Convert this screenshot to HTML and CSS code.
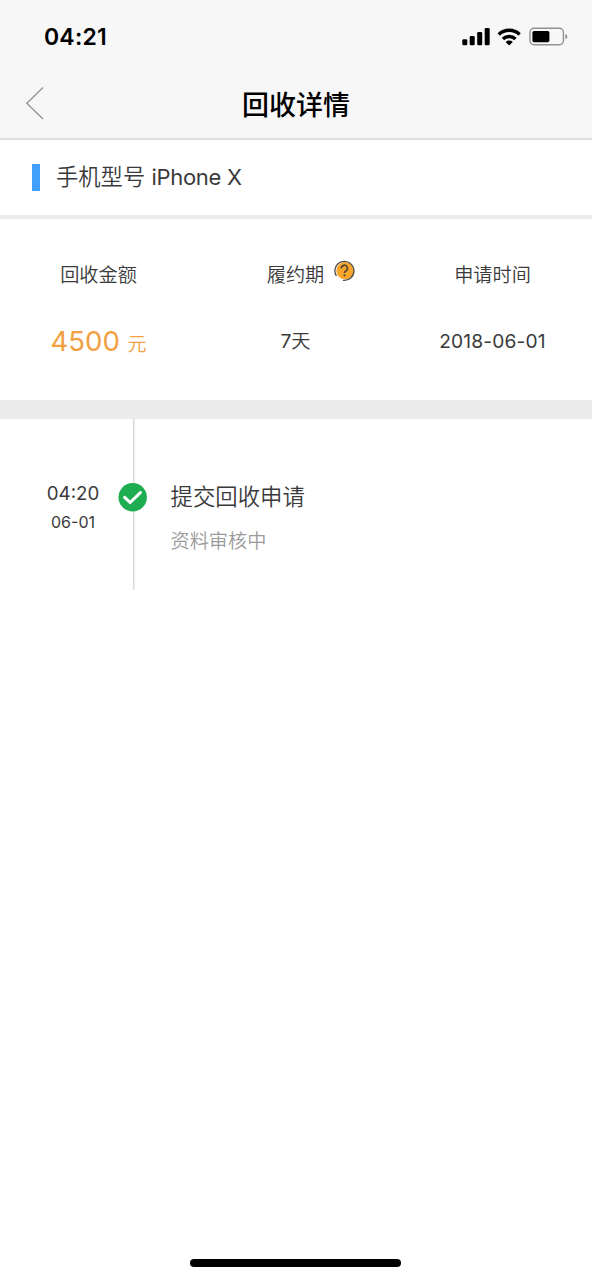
FILE: index.html
```html
<!DOCTYPE html>
<html lang="zh-CN">
<head>
<meta charset="utf-8">
<title>回收详情</title>
<link rel="stylesheet" href="styles.css">
</head>
<body>
<div class="screen">
  <header class="header">
    <div class="status">
      <span class="clock">04:21</span>
      <svg class="status-icons" width="108" height="22" viewBox="0 0 108 22">
        <rect x="2.3" y="12.2" width="5" height="6" rx="1.3"/>
        <rect x="9.7" y="9" width="5" height="9.2" rx="1.3"/>
        <rect x="17.2" y="5" width="5" height="13.2" rx="1.3"/>
        <rect x="24.7" y="1" width="5" height="17.2" rx="1.3"/>
        <path d="M38.8 7.4a15.2 15.2 0 0 1 20.8 0M42.9 12a9 9 0 0 1 12.6 0" fill="none" stroke="#000" stroke-width="3.4"/>
        <path d="M49.2 18.4l-3.6-3.5a5.2 5.2 0 0 1 7.2 0z"/>
        <rect x="70" y="1.3" width="33.4" height="16.4" rx="4" fill="none" stroke="#929292" stroke-width="1.4"/>
        <rect x="72.4" y="3.9" width="17" height="11.4" rx="1.8"/>
        <path d="M105.3 6.7c2.7 1 2.7 4.6 0 5.6z" fill="#929292"/>
      </svg>
    </div>
    <div class="nav">
      <svg class="back" width="20" height="34" viewBox="0 0 20 34"><path d="M18 1.5L1.8 17.2 18 33" fill="none" stroke="#929292" stroke-width="1.3"/></svg>
      <h1 class="title">回收详情</h1>
    </div>
  </header>
  <section class="model"><i class="mark"></i><span class="model-name">手机型号 <span class="device">iPhone X</span></span></section>
  <section class="summary">
    <div class="cell"><span class="label">回收金额</span><span class="value price">4500 <small class="unit">元</small></span></div>
    <div class="cell">
      <span class="label">履约期<svg class="help" width="22" height="22" viewBox="0 0 22 22">
        <circle cx="11.9" cy="10.7" r="8.6" fill="#f8a72b"/>
        <path d="M3.4 16A9.5 9.5 0 1 1 10 20.3" fill="none" stroke="#514a44" stroke-width="1.3"/>
        <path d="M8.4 8.4a3 3 0 1 1 4.4 2.5c-1 .5-1.3 1-1.3 2" fill="none" stroke="#514536" stroke-width="1.7"/>
        <circle cx="11.5" cy="15.3" r="1.1" fill="#514536"/>
      </svg></span>
      <span class="value">7天</span>
    </div>
    <div class="cell"><span class="label">申请时间</span><span class="value date">2018-06-01</span></div>
  </section>
  <section class="timeline">
    <div class="when"><span class="time">04:20</span><span class="day">06-01</span></div>
    <div class="rail">
      <svg class="check" width="30" height="30" viewBox="0 0 30 30"><circle cx="14.7" cy="15.3" r="14.2" fill="#1fad51"/><path d="M6.7 15.3l5.4 5.2L22.4 10.6" fill="none" stroke="#fff" stroke-width="3.1" stroke-linecap="round" stroke-linejoin="round"/></svg>
    </div>
    <div class="event"><span class="event-title">提交回收申请</span><span class="event-note">资料审核中</span></div>
  </section>
  <div class="home-bar"></div>
</div>
</body>
</html>
```
FILE: styles.css
```css
body {
  margin: 0;
  background: #fff;
  color: #3a3a3a;
  font-family: Inter, "Noto Sans CJK SC DemiLight", "Noto Sans CJK SC", sans-serif;
  font-weight: 400;
}
.screen {
  display: flex;
  flex-direction: column;
  width: 592px;
  height: 1280px;
}
.header {
  box-sizing: border-box;
  height: 140px;
  background: #f7f7f7;
  border-bottom: 2px solid #dedede;
  color: #000;
}
.status {
  display: flex;
  justify-content: space-between;
  align-items: center;
  height: 72px;
  padding: 0 24px 0 44px;
}
.clock {
  padding-top: 2px;
  font-size: 23px;
  font-weight: 600;
  line-height: 30px;
  letter-spacing: 0.2px;
}
.status-icons {
  margin-top: 4px;
}
.nav {
  display: grid;
  grid-template-columns: 66px 1fr 66px;
  align-items: center;
  height: 62px;
}
.back {
  margin-left: 25px;
}
.title {
  margin: 0;
  padding-top: 5px;
  font-family: Inter, "Noto Sans CJK SC", sans-serif;
  font-size: 27px;
  font-weight: 500;
  line-height: 36px;
  text-align: center;
}
.model {
  display: flex;
  align-items: center;
  height: 75px;
  padding-left: 32px;
  border-bottom: 4px solid #ebebeb;
}
.mark {
  width: 8px;
  height: 27px;
  background: #429ffc;
}
.model-name {
  margin: -1px 0 0 16px;
  font-size: 22.3px;
  line-height: 30px;
}
.device {
  font-size: 22px;
  letter-spacing: -0.3px;
}
.summary {
  display: grid;
  grid-template-columns: repeat(3, 197px);
  height: 181px;
  border-bottom: 19px solid #ebebeb;
}
.cell {
  display: flex;
  flex-direction: column;
  align-items: center;
  padding-top: 41px;
}
.label {
  display: flex;
  font-size: 19.2px;
  line-height: 30px;
}
.help {
  margin: 0 -31px 0 9px;
}
.value {
  margin-top: 31px;
  font-size: 19.2px;
  line-height: 40px;
}
.price {
  color: #f2a041;
  font-size: 27.6px;
}
.unit {
  font-size: 19px;
}
.date {
  letter-spacing: 0.15px;
}
.timeline {
  display: flex;
  height: 171px;
}
.when {
  display: flex;
  flex-direction: column;
  align-items: center;
  width: 118px;
  padding-top: 60px;
}
.time {
  margin-left: 28px;
  font-size: 18.7px;
  line-height: 29px;
}
.day {
  margin-left: 28px;
  font-size: 16px;
  line-height: 28px;
}
.rail {
  display: flex;
  justify-content: center;
  align-items: flex-start;
  width: 30px;
  padding-top: 63px;
  background: linear-gradient(#d9d9d9, #d9d9d9) 15px 0 / 1.5px 100% no-repeat;
}
.event {
  display: flex;
  flex-direction: column;
  padding: 62px 0 0 22.5px;
}
.event-title {
  font-size: 22.4px;
  line-height: 32px;
}
.event-note {
  margin-top: 14px;
  color: #9b9b9b;
  font-size: 19.2px;
  line-height: 28px;
}
.home-bar {
  width: 211px;
  height: 8px;
  margin: auto auto 13px 190px;
  border-radius: 4px;
  background: #000;
}
```
